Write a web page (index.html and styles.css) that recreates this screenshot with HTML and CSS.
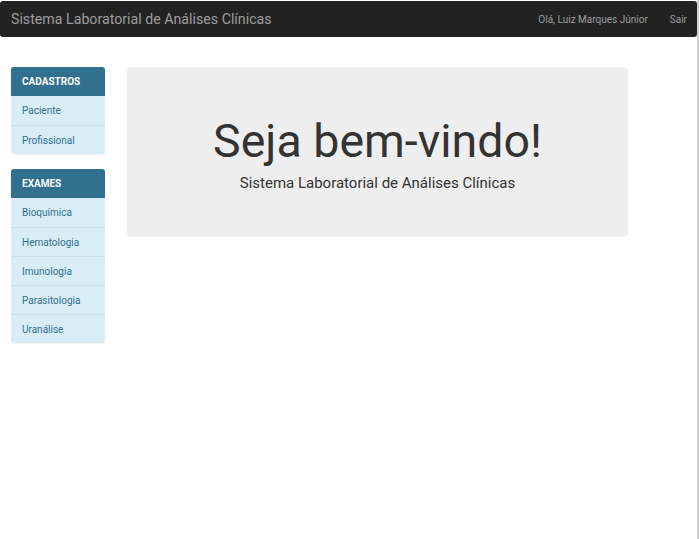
FILE: index.html
```html
<!DOCTYPE html>
<html lang="pt-BR">
<head>
<meta charset="utf-8">
<title>Sistema Laboratorial de Análises Clínicas</title>
<link rel="stylesheet" href="styles.css">
</head>
<body>
<div class="frame">
  <nav class="navbar">
    <span class="brand">Sistema Laboratorial de Análises Clínicas</span>
    <div class="nav-right">
      <span class="user">Olá, Luiz Marques Júnior</span>
      <a class="logout" href="#">Sair</a>
    </div>
  </nav>
  <div class="main">
    <aside class="sidebar">
      <div class="panel">
        <div class="panel-head">CADASTROS</div>
        <a class="item" href="#">Paciente</a>
        <a class="item" href="#">Profissional</a>
      </div>
      <div class="panel">
        <div class="panel-head">EXAMES</div>
        <a class="item" href="#">Bioquímica</a>
        <a class="item" href="#">Hematologia</a>
        <a class="item" href="#">Imunologia</a>
        <a class="item" href="#">Parasitologia</a>
        <a class="item" href="#">Uranálise</a>
      </div>
    </aside>
    <section class="jumbotron">
      <h1 class="title">Seja bem-vindo!</h1>
      <p class="subtitle">Sistema Laboratorial de Análises Clínicas</p>
    </section>
  </div>
</div>
</body>
</html>
```
FILE: styles.css
```css
* { box-sizing: border-box; }
html, body { margin: 0; padding: 0; background: #fff; }
body {
  font-family: Roboto, "Liberation Sans", sans-serif;
  width: 699px;
  height: 539px;
  overflow: hidden;
}
.frame {
  width: 699px;
  height: 539px;
  border-right: 2px solid #d0d0d0;
  padding-top: 1px;
}
.navbar {
  height: 36px;
  width: 697px;
  background: #222;
  border-radius: 3px;
  display: flex;
  align-items: center;
  justify-content: space-between;
  padding: 0 10px 0 11px;
}
.brand {
  color: #9d9d9d;
  font-size: 14.2px;
}
.nav-right {
  display: flex;
  align-items: center;
  gap: 22px;
}
.user, .logout {
  color: #9d9d9d;
  font-size: 10px;
  text-decoration: none;
}
.main {
  display: flex;
  align-items: flex-start;
  padding: 30px 0 0 11px;
  gap: 22px;
}
.sidebar {
  width: 94px;
  display: flex;
  flex-direction: column;
  gap: 15px;
}
.panel {
  border-radius: 3px;
  overflow: hidden;
  background: #d9edf7;
  box-shadow: 0 1px 1px rgba(0,0,0,0.05);
}
.panel-head {
  height: 29px;
  background: #31708f;
  color: #fff;
  font-size: 10px;
  font-weight: 700;
  display: flex;
  align-items: center;
  padding-left: 11px;
}
.item {
  display: flex;
  align-items: center;
  height: 29px;
  padding-left: 11px;
  color: #31708f;
  font-size: 10px;
  text-decoration: none;
  border-top: 1px solid #c8e1ee;
}
.panel-head + .item { border-top: none; height: 29px; }
.jumbotron {
  width: 501px;
  height: 170px;
  background: #eee;
  border-radius: 4px;
  display: flex;
  flex-direction: column;
  align-items: center;
  padding-top: 46px;
}
.title {
  margin: 0;
  font-size: 46.5px;
  font-weight: 400;
  color: #333;
  line-height: 56px;
}
.subtitle {
  margin: 4px 0 0 0;
  font-size: 15px;
  color: #333;
  line-height: 20px;
}
```
